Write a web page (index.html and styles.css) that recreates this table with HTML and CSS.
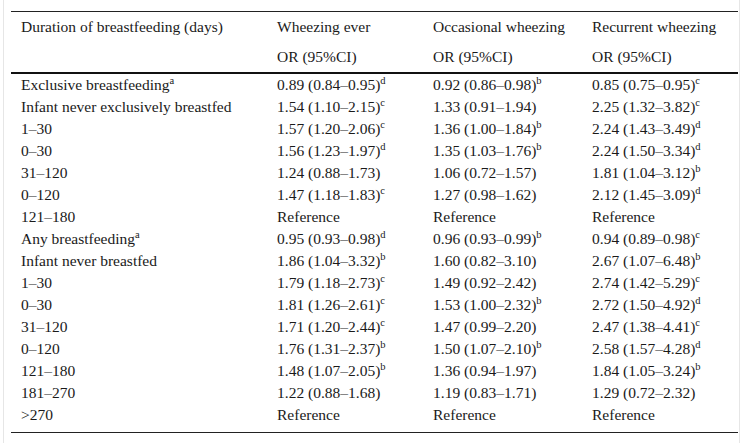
FILE: index.html
```html
<!DOCTYPE html>
<html>
<head>
<meta charset="utf-8">
<link rel="stylesheet" href="styles.css">
</head>
<body>
<div class="frame">
<table class="tbl">
<thead>
<tr class="h1"><th>Duration of breastfeeding (days)</th><th>Wheezing ever</th><th>Occasional wheezing</th><th>Recurrent wheezing</th></tr>
<tr class="h2"><th></th><th>OR (95%CI)</th><th>OR (95%CI)</th><th>OR (95%CI)</th></tr>
</thead>
<tbody>
<tr><td>Exclusive breastfeeding<sup>a</sup></td><td>0.89 (0.84–0.95)<sup>d</sup></td><td>0.92 (0.86–0.98)<sup>b</sup></td><td>0.85 (0.75–0.95)<sup>c</sup></td></tr>
<tr><td>Infant never exclusively breastfed</td><td>1.54 (1.10–2.15)<sup>c</sup></td><td>1.33 (0.91–1.94)</td><td>2.25 (1.32–3.82)<sup>c</sup></td></tr>
<tr><td>1–30</td><td>1.57 (1.20–2.06)<sup>c</sup></td><td>1.36 (1.00–1.84)<sup>b</sup></td><td>2.24 (1.43–3.49)<sup>d</sup></td></tr>
<tr><td>0–30</td><td>1.56 (1.23–1.97)<sup>d</sup></td><td>1.35 (1.03–1.76)<sup>b</sup></td><td>2.24 (1.50–3.34)<sup>d</sup></td></tr>
<tr><td>31–120</td><td>1.24 (0.88–1.73)</td><td>1.06 (0.72–1.57)</td><td>1.81 (1.04–3.12)<sup>b</sup></td></tr>
<tr><td>0–120</td><td>1.47 (1.18–1.83)<sup>c</sup></td><td>1.27 (0.98–1.62)</td><td>2.12 (1.45–3.09)<sup>d</sup></td></tr>
<tr><td>121–180</td><td>Reference</td><td>Reference</td><td>Reference</td></tr>
<tr><td>Any breastfeeding<sup>a</sup></td><td>0.95 (0.93–0.98)<sup>d</sup></td><td>0.96 (0.93–0.99)<sup>b</sup></td><td>0.94 (0.89–0.98)<sup>c</sup></td></tr>
<tr><td>Infant never breastfed</td><td>1.86 (1.04–3.32)<sup>b</sup></td><td>1.60 (0.82–3.10)</td><td>2.67 (1.07–6.48)<sup>b</sup></td></tr>
<tr><td>1–30</td><td>1.79 (1.18–2.73)<sup>c</sup></td><td>1.49 (0.92–2.42)</td><td>2.74 (1.42–5.29)<sup>c</sup></td></tr>
<tr><td>0–30</td><td>1.81 (1.26–2.61)<sup>c</sup></td><td>1.53 (1.00–2.32)<sup>b</sup></td><td>2.72 (1.50–4.92)<sup>d</sup></td></tr>
<tr><td>31–120</td><td>1.71 (1.20–2.44)<sup>c</sup></td><td>1.47 (0.99–2.20)</td><td>2.47 (1.38–4.41)<sup>c</sup></td></tr>
<tr><td>0–120</td><td>1.76 (1.31–2.37)<sup>b</sup></td><td>1.50 (1.07–2.10)<sup>b</sup></td><td>2.58 (1.57–4.28)<sup>d</sup></td></tr>
<tr><td>121–180</td><td>1.48 (1.07–2.05)<sup>b</sup></td><td>1.36 (0.94–1.97)</td><td>1.84 (1.05–3.24)<sup>b</sup></td></tr>
<tr><td>181–270</td><td>1.22 (0.88–1.68)</td><td>1.19 (0.83–1.71)</td><td>1.29 (0.72–2.32)</td></tr>
<tr><td>&gt;270</td><td>Reference</td><td>Reference</td><td>Reference</td></tr>
</tbody>
</table>
</div>
</body>
</html>
```
FILE: styles.css
```css
html, body {
  margin: 0;
  padding: 0;
  background: #fff;
}
body {
  font-family: "Liberation Serif", "Times New Roman", serif;
  font-size: 15.5px;
  color: #1a1a1a;
}
.frame {
  margin-left: 3px;
  width: 737px;
  height: 443px;
  border-left: 1px solid #e6e6e6;
  border-right: 1px solid #e6e6e6;
  padding: 11px 1px 0 7px;
  box-sizing: border-box;
}
.tbl {
  width: 727px;
  border-collapse: collapse;
  border-top: 1px solid #222;
  border-bottom: 1px solid #222;
  font-size: 15.5px;
  line-height: 18px;
}
.tbl th {
  font-weight: normal;
  text-align: left;
  height: 30px;
  padding: 0 0 0 10px;
  vertical-align: middle;
}
.tbl .h2 th {
  border-bottom: 2px solid #111;
}
.tbl td {
  height: 22px;
  padding: 0 0 0 10px;
  vertical-align: middle;
  white-space: nowrap;
}
.tbl tbody tr:last-child td {
  height: 26px;
  vertical-align: top;
  padding-top: 2px;
}
.tbl th:nth-child(1), .tbl td:nth-child(1) { width: 246px; }
.tbl th:nth-child(2), .tbl td:nth-child(2) { width: 146px; }
.tbl th:nth-child(3), .tbl td:nth-child(3) { width: 149px; }
sup {
  font-size: 10.5px;
  line-height: 0;
  vertical-align: 6px;
}
```
